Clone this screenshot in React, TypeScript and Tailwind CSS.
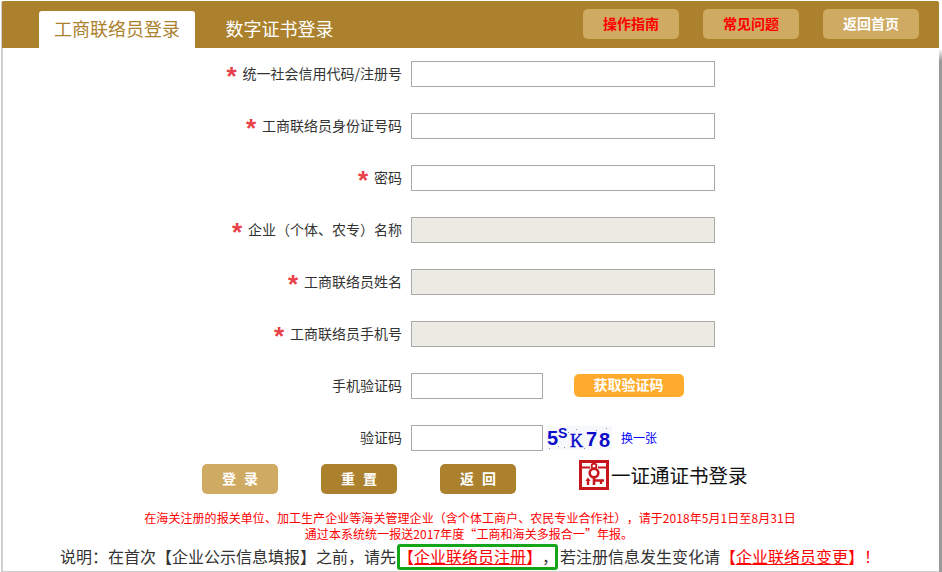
const cjk = "font-['Microsoft_YaHei','Noto_Sans_CJK_SC','Liberation_Sans',sans-serif]";

const rows = [
  { label: "统一社会信用代码/注册号", req: true },
  { label: "工商联络员身份证号码", req: true },
  { label: "密码", req: true },
  { label: "企业（个体、农专）名称", req: true, off: true },
  { label: "工商联络员姓名", req: true, off: true },
  { label: "工商联络员手机号", req: true, off: true },
];

function Row({ label, req, off, children, short }: { label: string; req?: boolean; off?: boolean; short?: boolean; children?: React.ReactNode }) {
  return (
    <div className="flex h-[26px] items-center">
      <div className="flex w-[408px] items-center justify-end pr-[9px] text-[14px] leading-[24px] text-[#333333]">
        {req && <span className="mr-[6px] mt-[4px] font-['Liberation_Sans'] text-[26px] font-bold leading-[20px] text-[#e8414a]">*</span>}
        <span className="mb-[2px]">{label}</span>
      </div>
      <div className={`h-[26px] border border-[#a9a9a9] ${short ? "w-[132px]" : "w-[304px]"} ${off ? "bg-[#ebebe4]" : "bg-white"}`} />
      {children}
    </div>
  );
}

function TopBtn({ text, red }: { text: string; red?: boolean }) {
  return (
    <div className={`flex h-[30px] w-[96px] items-center justify-center rounded-[5px] bg-[#cfaa62] pb-[2px] text-[14px] font-bold ${red ? "text-[#ff0000]" : "text-white"}`}>
      {text}
    </div>
  );
}

function ActBtn({ text, light }: { text: string; light?: boolean }) {
  return (
    <div className={`flex h-[30px] w-[76px] items-center justify-center rounded-[5px] pb-[2px] text-[14px] font-bold text-white [word-spacing:5px] ${light ? "bg-[#cfaa62]" : "bg-[#ab812e]"}`}>
      {text}
    </div>
  );
}

function Captcha() {
  return (
    <svg width="66" height="24" viewBox="0 0 66 24" className="ml-[3px] bg-[#f6f8fc]">
      <g fill="#0a0ac8" fontFamily="Liberation Sans" fontWeight="700">
        <text x="1" y="19" fontSize="20">5</text>
        <text x="12" y="12" fontSize="14">S</text>
        <text x="24" y="21" fontSize="18" fontFamily="Liberation Serif" fontWeight="400" stroke="#0a0ac8" strokeWidth="0.4">K</text>
        <text x="40" y="20" fontSize="20">7</text>
        <text x="53" y="21" fontSize="20">8</text>
      </g>
      <g fill="#8a8fb0">
        <rect x="3" y="22" width="1" height="1" /><rect x="12" y="20" width="1" height="1" /><rect x="22" y="6" width="1" height="1" />
        <rect x="30" y="3" width="1" height="1" /><rect x="38" y="22" width="1" height="1" /><rect x="50" y="4" width="1" height="1" />
        <rect x="60" y="2" width="1" height="1" /><rect x="18" y="21" width="1" height="1" />
      </g>
    </svg>
  );
}

function Logo() {
  return (
    <svg width="30" height="30" viewBox="0 0 30 30" className="shrink-0">
      <rect width="30" height="30" fill="#c8161d" />
      <rect x="3" y="3" width="24" height="24" fill="#fff" />
      <path d="M3 7.5h8M19 7.5h8" stroke="#c8161d" strokeWidth="1.8" fill="none" />
      <circle cx="15" cy="6" r="2.4" fill="none" stroke="#c8161d" strokeWidth="1.8" />
      <circle cx="15" cy="13" r="4.3" fill="none" stroke="#c8161d" strokeWidth="2.6" />
      <path d="M15 17v8" stroke="#c8161d" strokeWidth="2.6" fill="none" />
      <path d="M15 20.5h10M22 20v4" stroke="#c8161d" strokeWidth="2.4" fill="none" />
      <path d="M9 19v6" stroke="#c8161d" strokeWidth="2.4" fill="none" />
      <path d="M6.5 21L9 17.5L11.5 21z" fill="#c8161d" />
    </svg>
  );
}

export default function App() {
  return (
    <div className={`flex h-[572px] w-[942px] overflow-hidden bg-white pl-px pt-px [text-spacing-trim:space-all] ${cjk}`}>
      <div className="flex h-[571px] w-[938px] shrink-0 flex-col border-b border-l-2 border-[#cfcfcf]">
        <div className="-ml-px flex h-[47px] shrink-0 justify-between rounded-t-[2px] bg-[#ab812e] pl-[37px] pr-[20px]">
          <div className="flex items-end">
            <div className="flex h-[37px] w-[156px] items-center justify-center rounded-t-[3px] bg-white pb-[2px] text-[18px] text-[#ab812e]">工商联络员登录</div>
            <div className="flex h-[37px] w-[171px] items-center justify-center pb-[2px] pr-[2px] text-[18px] text-white">数字证书登录</div>
          </div>
          <div className="flex gap-[24px] pt-[8px]">
            <TopBtn text="操作指南" red />
            <TopBtn text="常见问题" red />
            <TopBtn text="返回首页" />
          </div>
        </div>

        <div className="flex flex-col gap-[26px] pt-[13px]">
          {rows.map((r) => (
            <Row key={r.label} {...r} />
          ))}
          <Row label="手机验证码" short>
            <div className="ml-[31px] -mt-[2px] flex h-[23px] w-[110px] items-center justify-center rounded-[5px] bg-[#ffac2e] pb-[1px] pr-[1px] text-[14px] font-bold text-white">获取验证码</div>
          </Row>
          <Row label="验证码" short>
            <Captcha />
            <span className="ml-[9px] text-[12px] text-[#0000ff]">换一张</span>
          </Row>
        </div>

        <div className="mt-[13px] flex h-[30px] pl-[199px]">
          <div className="flex gap-[43px]">
            <ActBtn text="登 录" light />
            <ActBtn text="重 置" />
            <ActBtn text="返 回" />
          </div>
          <div className="ml-[63px] -mt-[4px] flex h-[30px] items-center">
            <Logo />
            <span className="ml-[2px] pb-[1px] text-[19.5px] leading-[30px] text-[#111111]">一证通证书登录</span>
          </div>
        </div>

        <div className="mt-[16px] text-center text-[12px] leading-[16px] tracking-[0.06px] text-[#ff0000]">
          <p className="pr-[2px]">在海关注册的报关单位、加工生产企业等海关管理企业（含个体工商户、农民专业合作社），请于2018年5月1日至8月31日</p>
          <p className="pr-[4px]">通过本系统统一报送2017年度“工商和海关多报合一”年报。</p>
        </div>

        <div className="mt-[2px] flex h-[26px] items-start whitespace-nowrap pl-[57px] text-[16px] leading-[24px] text-[#333333]">
          <span>说明：在首次【企业公示信息填报】之前，请先</span>
          <span className="ml-px h-[26px] w-[161px] rounded-[3px] pl-px text-[#ff0000] ring-[3px] ring-inset ring-[#15a51b]">
            【<span className="underline">企业联络员注册</span>】<span className="text-[#333333]">，</span>
          </span>
          <span className="ml-[2px]">若注册信息发生变化请</span>
          <span className="text-[#ff0000]">【<span className="underline">企业联络员变更</span>】！</span>
        </div>
      </div>
      <div className="mt-[48px] h-[523px] w-[3px] bg-linear-to-b from-white to-[#9a9a9a] to-[12px]" />
    </div>
  );
}
